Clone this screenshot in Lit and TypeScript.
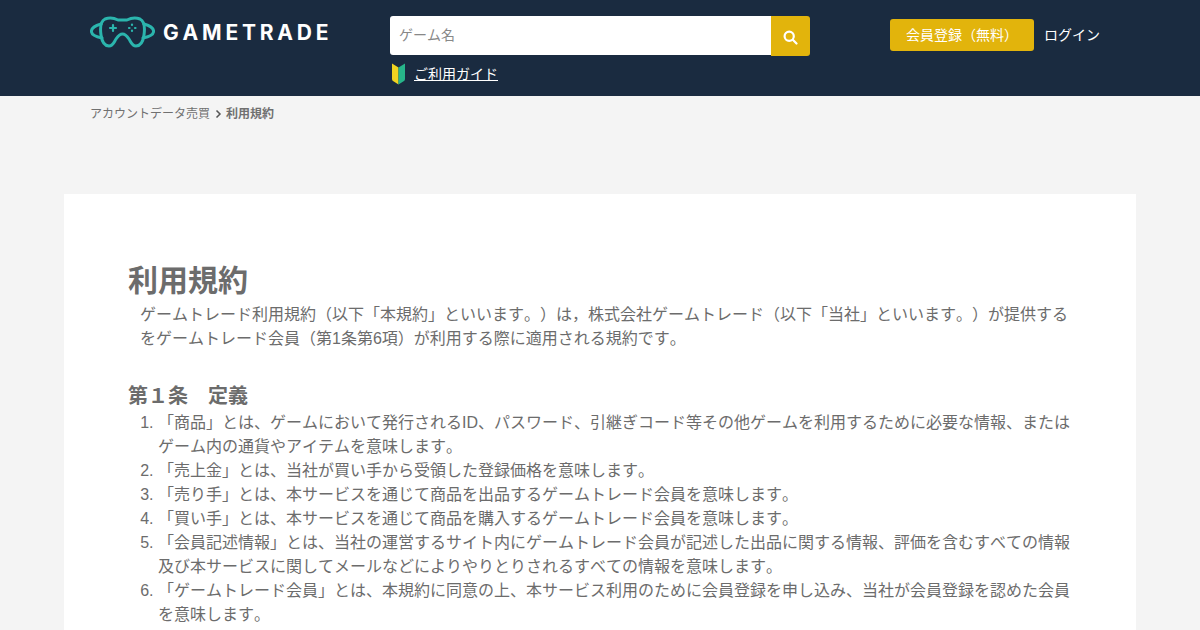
import { LitElement, html, css } from "lit";
import { customElement } from "lit/decorators.js";

const items = [
  "「商品」とは、ゲームにおいて発行されるID、パスワード、引継ぎコード等その他ゲームを利用するために必要な情報、またはゲーム内の通貨やアイテムを意味します。",
  "「売上金」とは、当社が買い手から受領した登録価格を意味します。",
  "「売り手」とは、本サービスを通じて商品を出品するゲームトレード会員を意味します。",
  "「買い手」とは、本サービスを通じて商品を購入するゲームトレード会員を意味します。",
  "「会員記述情報」とは、当社の運営するサイト内にゲームトレード会員が記述した出品に関する情報、評価を含むすべての情報及び本サービスに関してメールなどによりやりとりされるすべての情報を意味します。",
  "「ゲームトレード会員」とは、本規約に同意の上、本サービス利用のために会員登録を申し込み、当社が会員登録を認めた会員を意味します。",
];

@customElement("app-root")
export class AppRoot extends LitElement {
  static styles = css`
    :host {
      display: block;
      height: 630px;
      overflow: hidden;
      background: #f4f4f4;
      font-family: "Liberation Sans", "Noto Sans CJK JP", sans-serif;
      text-spacing-trim: space-all;
      font-kerning: none;
      font-feature-settings: "kern" 0, "palt" 0;
      color: #6c6c6c;
    }
    .header {
      height: 96px;
      background: #1a2b40;
      display: flex;
      padding-left: 90px;
      box-sizing: border-box;
    }
    .logo {
      width: 300px;
      height: 64px;
      display: flex;
      align-items: center;
      gap: 8px;
      flex: none;
    }
    .logo svg { flex: none; }
    .logo span {
      font-family: Inter, sans-serif;
      font-weight: 700;
      font-size: 21px;
      letter-spacing: 3.8px;
      color: #fff;
    }
    .search-col { width: 420px; flex: none; padding-top: 16px; }
    .search { display: flex; height: 40px; }
    .input {
      flex: 1;
      height: 39px;
      background: #fff;
      border-radius: 3px 0 0 3px;
      font-size: 14px;
      color: #888;
      padding-left: 9px;
      line-height: 39px;
      box-sizing: border-box;
    }
    .btn {
      width: 39px;
      background: #e2b40c;
      border-radius: 0 3px 3px 0;
      display: flex;
      align-items: center;
      justify-content: center;
      padding-top: 2px;
      box-sizing: border-box;
    }
    .guide {
      display: flex;
      align-items: center;
      gap: 9px;
      margin: 7px 0 0 2px;
      font-size: 14px;
      line-height: 22px;
      color: #fff;
      text-decoration: underline;
    }
    .actions {
      margin-left: 80px;
      padding-top: 19px;
      display: flex;
      align-items: flex-start;
      gap: 10px;
      font-size: 14px;
    }
    .signup {
      width: 144px;
      height: 32px;
      line-height: 33px;
      text-align: center;
      background: #e2b40c;
      border-radius: 3px;
      color: #fff;
    }
    .login { color: #fff; line-height: 33px; }
    .crumbs {
      height: 98px;
      padding: 10px 0 0 90px;
      box-sizing: border-box;
      display: flex;
      align-items: flex-start;
      font-size: 12px;
      line-height: 16px;
      color: #707070;
    }
    .crumbs svg { margin: 4px 4px 0 4px; }
    .crumbs b { font-weight: 700; }
    .card {
      margin: 0 64px;
      background: #fff;
      padding: 65px 64px 0;
      height: 500px;
      box-sizing: border-box;
    }
    h1 {
      margin: 0;
      font-size: 30px;
      line-height: 44px;
      font-weight: 700;
    }
    .lead {
      margin: 0 0 30px 12px;
      font-size: 16px;
      line-height: 24px;
    }
    h2 {
      margin: 0;
      font-size: 20px;
      line-height: 30px;
      font-weight: 700;
    }
    ol {
      margin: 0;
      padding: 0 0 0 30px;
      font-size: 16px;
      line-height: 24px;
    }
  `;

  render() {
    return html`
      <div class="header">
        <div class="logo">
          <svg width="65" height="32" viewBox="0 0 65 32" fill="none" stroke="#2bb5ad" stroke-width="3" stroke-linecap="round" stroke-linejoin="round">
            <path d="M11 8 C4 10 1 13 1.500 16 C2 19 7 21 12 22" />
            <path d="M54 8 C61 10 64 13 63.500 16 C63 19 58 21 53 22" />
            <path d="M15 3 C21 1 26 3 28 4 L37 4 C39 3 44 1 50 3 C54 5 55 12 54 19 C53 26 50 30 46 30 C42 30 41 26 39 23 C37 20 34 18 32.500 18 C31 18 28 20 26 23 C24 26 23 30 19 30 C15 30 12 26 11 19 C10 12 11 5 15 3 Z" />
            <path d="M23 9 V15 M20 12 H26" stroke-width="2.200" />
            <path d="M42 8.500 V9 M42 14.500 V15 M39 12 H39.500 M45 12 H45.500" stroke-width="2.200" />
          </svg>
          <span>GAMETRADE</span>
        </div>
        <div class="search-col">
          <div class="search">
            <div class="input">ゲーム名</div>
            <div class="btn">
              <svg width="15" height="15" viewBox="0 0 15 15" fill="none" stroke="#fff" stroke-width="2.2" stroke-linecap="round">
                <circle cx="6.200" cy="6.200" r="4.600" />
                <path d="M9.800 9.800 L13.500 13.500" />
              </svg>
            </div>
          </div>
          <div class="guide">
            <svg width="13" height="22" viewBox="0 0 13 22">
              <path d="M0 0.500 L6.500 4.500 V21.500 L1 18 Q0 17.500 0 16 Z" fill="#f0d320" />
              <path d="M13 0.500 L6.500 4.500 V21.500 L12 18 Q13 17.500 13 16 Z" fill="#27b58a" />
            </svg>
            <span>ご利用ガイド</span>
          </div>
        </div>
        <div class="actions">
          <div class="signup">会員登録（無料）</div>
          <div class="login">ログイン</div>
        </div>
      </div>
      <div class="crumbs">
        <span>アカウントデータ売買</span>
        <svg width="8" height="8" viewBox="0 0 8 8" fill="none" stroke="#555" stroke-width="1.500"><path d="M2.500 0.500 L6 4 L2.500 7.500" /></svg>
        <b>利用規約</b>
      </div>
      <div class="card">
        <h1>利用規約</h1>
        <p class="lead">ゲームトレード利用規約（以下「本規約」といいます。）は，株式会社ゲームトレード（以下「当社」といいます。）が提供するをゲームトレード会員（第1条第6項）が利用する際に適用される規約です。</p>
        <h2>第１条　定義</h2>
        <ol>${items.map((t) => html`<li>${t}</li>`)}</ol>
      </div>
    `;
  }
}
